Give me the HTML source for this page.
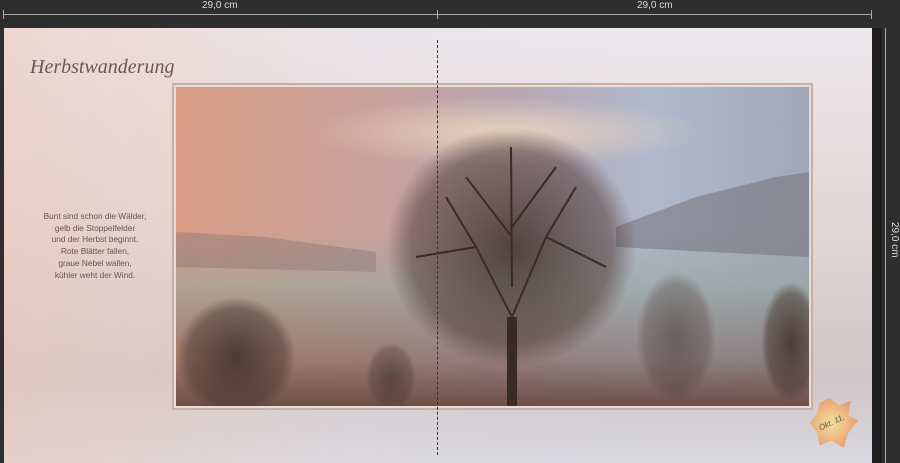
<!DOCTYPE html>
<html><head><meta charset="utf-8"><style>
body{margin:0;width:900px;height:463px;background:#2e2e2e;position:relative;overflow:hidden;font-family:"Liberation Sans",sans-serif}
.rul{position:absolute;color:#ddd;font-size:10px;white-space:nowrap}
.page{position:absolute;left:4px;top:28px;width:868px;height:435px;
background:linear-gradient(90deg,rgba(240,200,185,.55) 0%,rgba(230,220,225,.2) 40%,rgba(215,215,228,0) 70%),linear-gradient(180deg,#ece8ec 0%,#e0d4d4 50%,#cfc6c8 80%,#d8d8de 100%)}
.frame{position:absolute;left:172px;top:83px;width:641px;height:327px;box-sizing:border-box;border:2px solid #c9aea4;background:#e8dcd8;padding:2px}
.photo{width:100%;height:100%;position:relative;overflow:hidden;
background:linear-gradient(180deg,rgba(0,0,0,0) 0%,rgba(0,0,0,0) 45%,rgba(150,165,155,.6) 62%,rgba(125,100,92,.6) 85%,#6e5048 100%),
linear-gradient(90deg,#d89c84 0%,#c9a19a 30%,#b8a8b5 55%,#b0b8cc 75%,#a0a8b8 100%)}
.txt{position:absolute;left:30px;top:211px;width:130px;text-align:center;font-size:8.3px;line-height:11.7px;color:#6a5450}
</style></head><body>
<div style="position:absolute;left:3px;top:14px;width:869px;height:1px;background:#aaa"></div>
<div style="position:absolute;left:3px;top:10px;width:1px;height:9px;background:#aaa"></div>
<div style="position:absolute;left:437px;top:10px;width:1px;height:9px;background:#aaa"></div>
<div style="position:absolute;left:871px;top:10px;width:1px;height:9px;background:#aaa"></div>
<div class="rul" style="left:202px;top:0">29,0 cm</div>
<div class="rul" style="left:637px;top:0">29,0 cm</div>
<div style="position:absolute;left:872px;top:28px;width:10px;height:435px;background:#1e1e1e"></div>
<div style="position:absolute;left:885px;top:28px;width:1px;height:435px;background:#aaa"></div>
<div class="rul" style="left:900px;top:222px;transform:rotate(90deg);transform-origin:left top">29,0 cm</div>
<div class="page"></div>
<div style="position:absolute;left:30px;top:56px;font-family:'Liberation Serif',serif;font-style:italic;font-size:20px;color:#6a5656">Herbstwanderung</div>
<div class="txt">Bunt sind schon die Wälder,<br>gelb die Stoppelfelder<br>und der Herbst beginnt.<br>Rote Blätter fallen,<br>graue Nebel wallen,<br>kühler weht der Wind.</div>
<div class="frame"><div class="photo">
<svg width="633" height="319" viewBox="0 0 633 319" style="position:absolute;left:0;top:0">
<defs><radialGradient id="c" cx=".5" cy=".5" r=".5"><stop offset="0" stop-color="#f3dcc0" stop-opacity=".8"/><stop offset="1" stop-color="#f3dcc0" stop-opacity="0"/></radialGradient>
<radialGradient id="t" cx=".5" cy=".5" r=".5"><stop offset="0" stop-color="#3a2a25" stop-opacity=".8"/><stop offset=".8" stop-color="#4a3530" stop-opacity=".5"/><stop offset="1" stop-color="#4a3530" stop-opacity="0"/></radialGradient></defs>
<ellipse cx="330" cy="45" rx="200" ry="35" fill="url(#c)"/>
<path d="M440 140 L520 110 L600 90 L633 85 L633 170 L440 160Z" fill="#6e6a72" opacity=".5"/>
<path d="M0 145 L90 150 L200 165 L200 185 L0 180Z" fill="#8a7072" opacity=".4"/>
<ellipse cx="335" cy="160" rx="125" ry="120" fill="url(#t)"/>
<g stroke="#3a2a25" fill="none" stroke-width="2">
<path d="M336 320 L336 230 L300 160 L270 110 M336 230 L370 150 L400 100 M336 200 L335 60 M300 160 L240 170 M370 150 L430 180 M336 150 L290 90 M336 140 L380 80"/>
</g>
<rect x="331" y="230" width="10" height="90" fill="#3a2a25"/>
<ellipse cx="60" cy="270" rx="60" ry="60" fill="url(#t)"/>
<ellipse cx="215" cy="290" rx="25" ry="35" fill="url(#t)" opacity=".7"/>
<ellipse cx="500" cy="250" rx="40" ry="65" fill="url(#t)" opacity=".6"/>
<ellipse cx="615" cy="255" rx="30" ry="60" fill="url(#t)"/>
</svg></div></div>
<div style="position:absolute;left:437px;top:40px;height:415px;border-left:1px dashed #333"></div>
<div style="position:absolute;left:810px;top:398px;width:48px;height:50px;background:radial-gradient(circle at 45% 50%,#f4e0a0,#e9a070 70%,#e08870);clip-path:polygon(40% 0,60% 15%,85% 5%,80% 35%,100% 45%,80% 70%,70% 100%,45% 85%,20% 95%,15% 70%,0 50%,15% 30%,20% 10%);"></div>
<div style="position:absolute;left:818px;top:418px;font-size:8px;font-style:italic;color:#554;transform:rotate(-25deg)">Okt. 11.</div>
</body></html>
